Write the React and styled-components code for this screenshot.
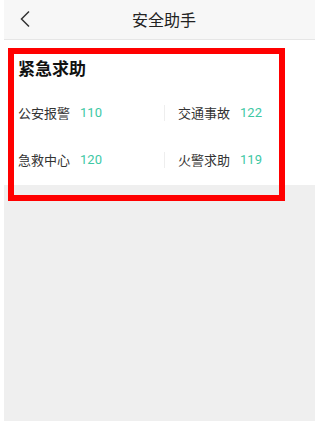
import React from "react";
import styled, { createGlobalStyle } from "styled-components";

const Global = createGlobalStyle`
  html, body { margin: 0; padding: 0; background: #ffffff; }
  body { font-family: "Noto Sans CJK SC", "Noto Sans", sans-serif; }
  * { box-sizing: border-box; }
`;

const Frame = styled.div`
  position: relative;
  width: 315px;
  height: 421px;
  padding-left: 4px;
  background: #ffffff;
  overflow: hidden;
`;

const Screen = styled.div`
  height: 100%;
  background: #efefef;
  display: flex;
  flex-direction: column;
`;

const Header = styled.header`
  height: 40px;
  flex: none;
  display: flex;
  align-items: center;
  padding: 0 28px 1px 13px;
  background: #f7f7f7;
  border-bottom: 1px solid #e6e6e6;
`;

const BackButton = styled.button`
  width: 24px;
  height: 24px;
  padding: 0;
  border: none;
  background: transparent;
  display: flex;
  align-items: center;
`;

const Title = styled.h1`
  flex: 1;
  margin: 0;
  text-align: center;
  font-size: 16px;
  font-weight: 400;
  line-height: 24px;
  color: #222;
`;

const Card = styled.section`
  background: #ffffff;
  padding: 16px 0 2px;
  overflow: hidden;
`;

const CardTitle = styled.h2`
  margin: 0 0 9px 14px;
  font-size: 17px;
  font-weight: 700;
  line-height: 24px;
  color: #111;
`;

const Grid = styled.div`
  display: grid;
  grid-template-columns: 160px 160px;
  grid-auto-rows: 47px;
`;

const Cell = styled.div`
  display: flex;
  align-items: center;
  padding-left: 14px;
  position: relative;
  ${(p) =>
    p.$divider &&
    `
    &::before {
      content: "";
      position: absolute;
      left: 0;
      top: 16px;
      width: 1px;
      height: 16px;
      background: #eeeeee;
    }
  `}
`;

const Label = styled.span`
  font-size: 13px;
  line-height: 18px;
  color: #333;
`;

const Number = styled.span`
  margin-left: 10px;
  font-family: Roboto, "Noto Sans", sans-serif;
  font-size: 13px;
  line-height: 18px;
  color: #3ec8a4;
`;

const Highlight = styled.div`
  position: absolute;
  left: 8px;
  top: 48px;
  width: 277px;
  height: 153px;
  border: 6px solid #ff0000;
  pointer-events: none;
`;

const items = [
  { label: "公安报警", num: "110" },
  { label: "交通事故", num: "122" },
  { label: "急救中心", num: "120" },
  { label: "火警求助", num: "119" },
];

export default function App() {
  return (
    <>
      <Global />
      <Frame>
        <Screen>
          <Header>
            <BackButton aria-label="返回">
              <svg width="24" height="24" viewBox="0 0 24 24">
                <polyline
                  points="12,4.5 4.5,12 12,19.5"
                  fill="none"
                  stroke="#333"
                  strokeWidth="1.5"
                />
              </svg>
            </BackButton>
            <Title>安全助手</Title>
          </Header>
          <Card>
            <CardTitle>紧急求助</CardTitle>
            <Grid>
              {items.map((it, i) => (
                <Cell key={it.label} $divider={i % 2 === 1}>
                  <Label>{it.label}</Label>
                  <Number>{it.num}</Number>
                </Cell>
              ))}
            </Grid>
          </Card>
        </Screen>
        <Highlight />
      </Frame>
    </>
  );
}
